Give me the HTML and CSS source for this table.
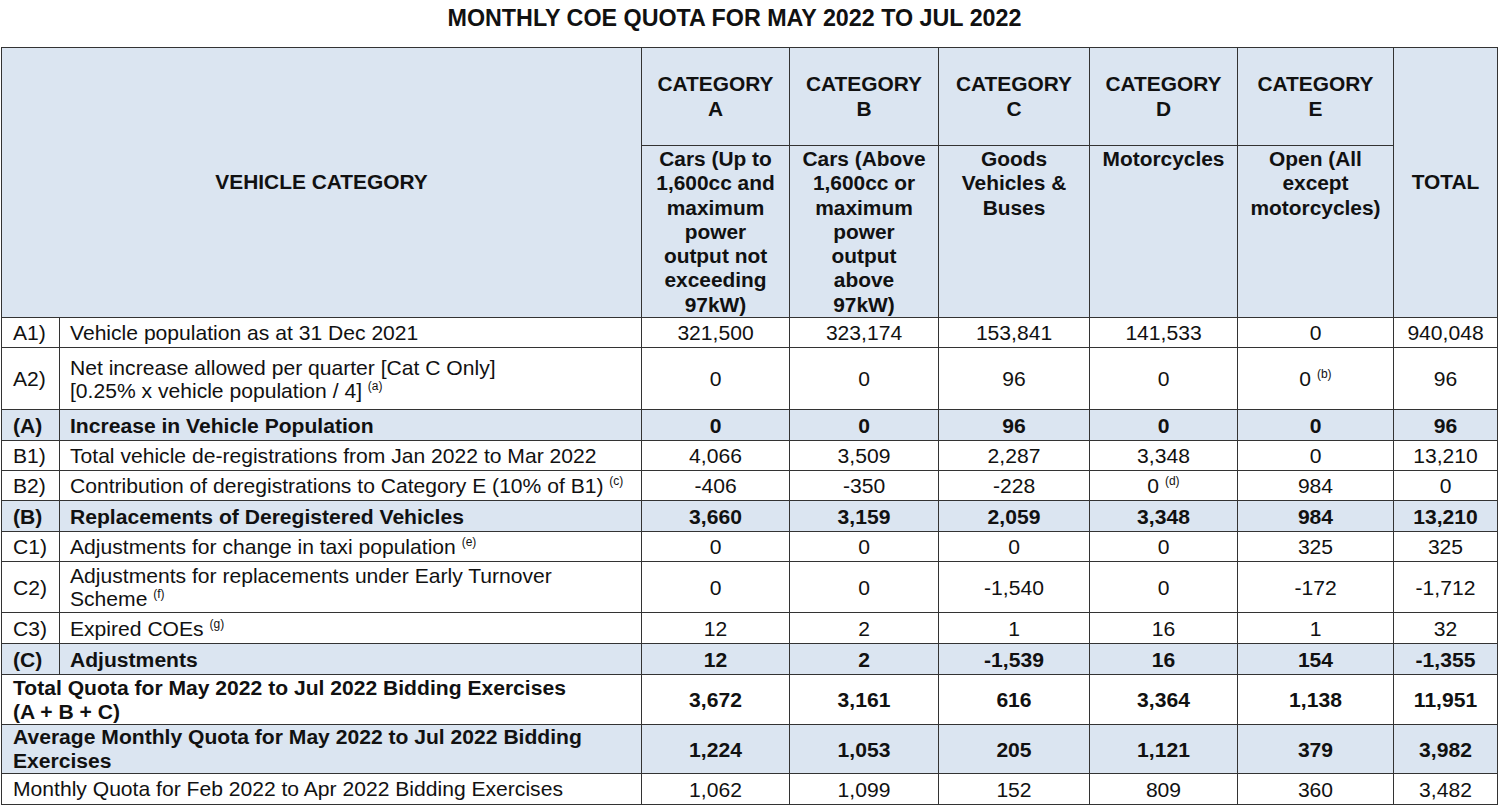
FILE: index.html
```html
<!DOCTYPE html>
<html>
<head>
<meta charset="utf-8">
<link rel="stylesheet" href="styles.css">
</head>
<body>
<h1 class="title">MONTHLY COE QUOTA FOR MAY 2022 TO JUL 2022</h1>
<div class="wrap">
<table class="quota">
  <colgroup>
    <col class="c-code"><col class="c-label"><col class="c-a"><col class="c-b"><col class="c-c"><col class="c-d"><col class="c-e"><col class="c-t">
  </colgroup>
  <thead>
    <tr class="h-cat">
      <th colspan="2" rowspan="2" class="h-main">VEHICLE CATEGORY</th>
      <th>CATEGORY<br>A</th>
      <th>CATEGORY<br>B</th>
      <th>CATEGORY<br>C</th>
      <th>CATEGORY<br>D</th>
      <th>CATEGORY<br>E</th>
      <th rowspan="2" class="h-main">TOTAL</th>
    </tr>
    <tr class="h-desc">
      <th>Cars (Up to<br>1,600cc and<br>maximum<br>power<br>output not<br>exceeding<br>97kW)</th>
      <th>Cars (Above<br>1,600cc or<br>maximum<br>power<br>output<br>above<br>97kW)</th>
      <th>Goods<br>Vehicles &amp;<br>Buses</th>
      <th>Motorcycles</th>
      <th>Open (All<br>except<br>motorcycles)</th>
    </tr>
  </thead>
  <tbody>
    <tr class="r30 r-a1">
      <td class="code">A1)</td><td class="label">Vehicle population as at 31 Dec 2021</td>
      <td>321,500</td><td>323,174</td><td>153,841</td><td>141,533</td><td>0</td><td>940,048</td>
    </tr>
    <tr class="r62">
      <td class="code">A2)</td><td class="label">Net increase allowed per quarter [Cat C Only]<br>[0.25% x vehicle population / 4] <sup>(a)</sup></td>
      <td>0</td><td>0</td><td>96</td><td>0</td><td>0 <sup>(b)</sup></td><td>96</td>
    </tr>
    <tr class="r31 sum">
      <td class="code">(A)</td><td class="label">Increase in Vehicle Population</td>
      <td>0</td><td>0</td><td>96</td><td>0</td><td>0</td><td>96</td>
    </tr>
    <tr class="r30">
      <td class="code">B1)</td><td class="label">Total vehicle de-registrations from Jan 2022 to Mar 2022</td>
      <td>4,066</td><td>3,509</td><td>2,287</td><td>3,348</td><td>0</td><td>13,210</td>
    </tr>
    <tr class="r30">
      <td class="code">B2)</td><td class="label">Contribution of deregistrations to Category E (10% of B1) <sup>(c)</sup></td>
      <td>-406</td><td>-350</td><td>-228</td><td>0 <sup>(d)</sup></td><td>984</td><td>0</td>
    </tr>
    <tr class="r31 sum">
      <td class="code">(B)</td><td class="label">Replacements of Deregistered Vehicles</td>
      <td>3,660</td><td>3,159</td><td>2,059</td><td>3,348</td><td>984</td><td>13,210</td>
    </tr>
    <tr class="r30">
      <td class="code">C1)</td><td class="label">Adjustments for change in taxi population <sup>(e)</sup></td>
      <td>0</td><td>0</td><td>0</td><td>0</td><td>325</td><td>325</td>
    </tr>
    <tr class="r51">
      <td class="code">C2)</td><td class="label">Adjustments for replacements under Early Turnover<br>Scheme <sup>(f)</sup></td>
      <td>0</td><td>0</td><td>-1,540</td><td>0</td><td>-172</td><td>-1,712</td>
    </tr>
    <tr class="r31">
      <td class="code">C3)</td><td class="label">Expired COEs <sup>(g)</sup></td>
      <td>12</td><td>2</td><td>1</td><td>16</td><td>1</td><td>32</td>
    </tr>
    <tr class="r31 sum">
      <td class="code">(C)</td><td class="label">Adjustments</td>
      <td>12</td><td>2</td><td>-1,539</td><td>16</td><td>154</td><td>-1,355</td>
    </tr>
    <tr class="r50 bold">
      <td colspan="2" class="wide">Total Quota for May 2022 to Jul 2022 Bidding Exercises<br>(A + B + C)</td>
      <td>3,672</td><td>3,161</td><td>616</td><td>3,364</td><td>1,138</td><td>11,951</td>
    </tr>
    <tr class="r48 sum">
      <td colspan="2" class="wide">Average Monthly Quota for May 2022 to Jul 2022 Bidding<br>Exercises</td>
      <td>1,224</td><td>1,053</td><td>205</td><td>1,121</td><td>379</td><td>3,982</td>
    </tr>
    <tr class="r31">
      <td colspan="2" class="wide">Monthly Quota for Feb 2022 to Apr 2022 Bidding Exercises</td>
      <td>1,062</td><td>1,099</td><td>152</td><td>809</td><td>360</td><td>3,482</td>
    </tr>
  </tbody>
</table>
</div>
</body>
</html>
```
FILE: styles.css
```css
html, body {
  margin: 0;
  padding: 0;
  background: #ffffff;
}
body {
  font-family: "Liberation Sans", Arial, sans-serif;
  color: #111;
}
.title {
  margin: 0;
  padding: 5px 31px 0 0;
  height: 47px;
  box-sizing: border-box;
  font-size: 23.3px;
  line-height: 27px;
  font-weight: bold;
  text-align: center;
  color: #111;
}
.wrap {
  padding-left: 1px;
}
.quota {
  border-collapse: collapse;
  table-layout: fixed;
  width: 1497px;
  font-size: 21.1px;
}
.c-code { width: 58px; }
.c-label { width: 582px; }
.c-a { width: 148px; }
.c-b { width: 149px; }
.c-c { width: 151px; }
.c-d { width: 148px; }
.c-e { width: 156px; }
.c-t { width: 104px; }

.quota th, .quota td {
  border: 1px solid #333;
  padding: 0 4px;
  text-align: center;
  vertical-align: middle;
  line-height: 23px;
}
.quota thead th {
  background: #dbe5f1;
  font-weight: bold;
  font-size: 20.9px;
  line-height: 24.3px;
}
.h-cat { height: 98px; }
.h-desc { height: 172px; }
.h-desc th {
  vertical-align: top;
  padding-top: 1px;
}
.quota td.code {
  text-align: left;
  padding-left: 11px;
}
.quota td.label {
  text-align: left;
  padding-left: 10px;
}
.quota td.wide {
  text-align: left;
  padding-left: 11px;
  line-height: 24px;
}
.sum td {
  background: #dbe5f1;
  font-weight: bold;
}
.bold td {
  font-weight: bold;
}
.r30 { height: 30px; }
.r31 { height: 31px; }
.r48 { height: 48px; }
.r50 { height: 50px; }
.r51 { height: 51px; }
.r62 { height: 62px; }
sup {
  font-size: 12px;
  line-height: 0;
  vertical-align: 8px;
  font-weight: normal;
}
```
